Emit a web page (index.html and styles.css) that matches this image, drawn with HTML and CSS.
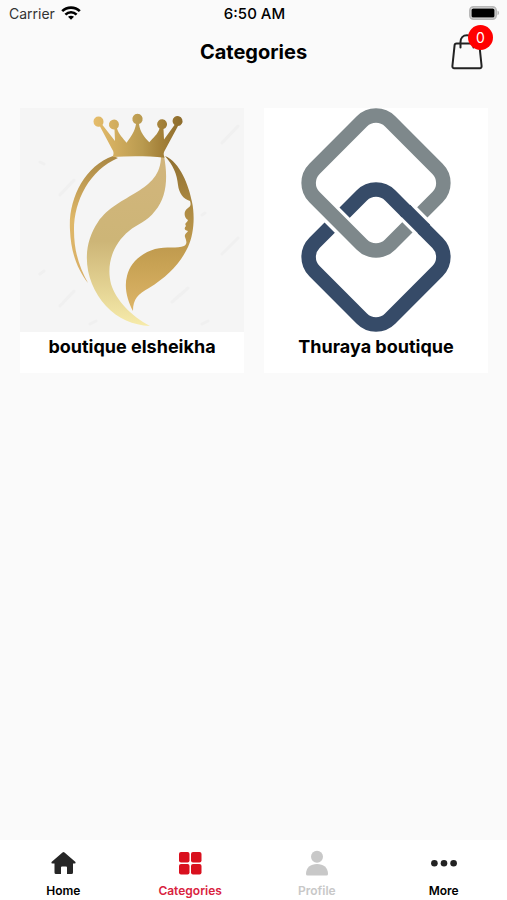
FILE: index.html
```html
<!DOCTYPE html>
<html lang="en">
<head>
    <meta charset="UTF-8">
    <meta name="viewport" content="width=device-width, initial-scale=1.0">
    <title>Categories</title>
    <link rel="stylesheet" href="styles.css">
</head>
<body>
    <div class="status-bar">
        <div class="carrier">
            <span>Carrier</span>
            <svg width="20" height="14" viewBox="0 0 20 14" fill="none" stroke="#000" stroke-width="2.6">
                <path d="M1.2 5.2C6 0.4 14 0.4 18.8 5.2"/>
                <path d="M4.4 8.6C7.6 5.5 12.4 5.5 15.6 8.6"/>
                <path d="M10 13.8L7 10.8C8.7 9.3 11.3 9.3 13 10.8Z" fill="#000" stroke="none"/>
            </svg>
        </div>
        <span class="time">6:50 AM</span>
        <svg class="battery" width="31" height="14" viewBox="0 0 31 14">
            <rect x="0.9" y="0.9" width="26.2" height="12.2" rx="3.6" fill="#fafafa" stroke="#b8b8b8" stroke-width="1.8"/>
            <rect x="2.5" y="2.5" width="23" height="9" rx="1.6" fill="#000"/>
            <path d="M28.5 4.8C30.6 5.4 30.6 8.6 28.5 9.2Z" fill="#b8b8b8"/>
        </svg>
    </div>

    <header class="header">
        <h1>Categories</h1>
        <button class="cart" type="button" aria-label="Cart">
            <svg width="32" height="36" viewBox="0 0 32 36" fill="none" stroke="#222" stroke-width="2" stroke-linecap="round" stroke-linejoin="round">
                <path d="M5.5 9.5H26.5C27.6 9.5 28.3 10.1 28.4 11.2L30.6 32C30.7 33.3 30 34.2 28.8 34.2H3.2C2 34.2 1.3 33.3 1.4 32L3.6 11.2C3.7 10.1 4.4 9.5 5.5 9.5Z"/>
                <path d="M9.5 13.5V8C9.5 4 12 1.2 16 1.2S22.5 4 22.5 8V13.5"/>
            </svg>
            <span class="badge">0</span>
        </button>
    </header>

    <main class="cards">
        <a class="card" href="#">
            <svg class="picture" viewBox="0 0 224 224">
                <defs>
                    <linearGradient id="crown" x1="0" x2="1" y1="0" y2="0">
                        <stop offset="0" stop-color="#e6bd6b"/>
                        <stop offset="0.55" stop-color="#b99a4f"/>
                        <stop offset="0.75" stop-color="#a5823a"/>
                        <stop offset="1" stop-color="#8d6c2c"/>
                    </linearGradient>
                    <linearGradient id="arc" x1="0" x2="0" y1="0" y2="1">
                        <stop offset="0" stop-color="#a98743"/>
                        <stop offset="0.5" stop-color="#dfb869"/>
                        <stop offset="1" stop-color="#d8ae66"/>
                    </linearGradient>
                    <linearGradient id="hair" x1="0" x2="0" y1="0" y2="1">
                        <stop offset="0" stop-color="#d2b57c"/>
                        <stop offset="0.5" stop-color="#cdb577"/>
                        <stop offset="1" stop-color="#f6ebaa"/>
                    </linearGradient>
                    <linearGradient id="face" x1="0" x2="0" y1="0" y2="1">
                        <stop offset="0" stop-color="#8f6f30"/>
                        <stop offset="0.35" stop-color="#ae8b43"/>
                        <stop offset="0.7" stop-color="#c8a254"/>
                        <stop offset="1" stop-color="#ddb568"/>
                    </linearGradient>
                </defs>
                <rect width="224" height="224" fill="#f5f5f5"/>
                <g stroke="#f0f0f0" stroke-width="3" stroke-linecap="round">
                    <path d="M202 35L218 18M40 87L54 72M202 146L218 130M40 198L54 183M152 194L168 180"/>
                    <path d="M20 54L24 56M20 166L24 163M182 107L185 105M70 216L76 213M182 216L188 213"/>
                </g>
                <path fill="url(#arc)" d="M93 48C64 58 48 92 50 122C51 146 58 162 68 175C60 160 54 145 54 122C54 92 70 62 98 50Z"/>
                <path fill="url(#hair)" d="M141 48C141 85 98 85 78 114C59 142 66 176 86 198C98 211 113 217 130 218C111 208 96 192 91 176C86 156 93 136 109 123C117 116 127 114 135 103C147 89 148 69 144 48Z"/>
                <path fill="url(#face)" d="M145 48C160 54 169 78 172 94C175 108 174 126 168 139C160 156 147 169 129 180C118 186 113 191 113 203C107 192 104 179 107 168C110 156 119 146 135 141C146 138 158 141 164 138C168 136 166 132 165 129C164 126 167 125 168 123C164 122 164 120 166 118C164 115 167 115 168 112C164 110 163 103 168 100C171 98 171 96 170 93C163 91 159 85 158 77C157 66 153 57 145 48Z"/>
                <path fill="url(#crown)" d="M73.5 13.5A5 5 0 0 1 83.5 13.5A5 5 0 0 1 82.5 17L95 33L94.5 21.5A5 5 0 1 1 97 20.5C99 27 103 30 106.5 34.7C111 29 115 23 116 16A5.2 5.2 0 1 1 119 16C120 24 125 30 129.300 34.300C133 30 138 26 139.500 20.500A5 5 0 1 1 143.500 21L144 31.500L154.500 17A5 5 0 1 1 158 18L144.500 43C143 46 144 47 144.500 49.700C128 48 110 48 92.500 49C94 46 94 44 92 41L80 18.500A5 5 0 0 1 73.500 13.500Z"/>
            </svg>
            <span class="name">boutique elsheikha</span>
        </a>
        <a class="card" href="#">
            <svg class="picture" viewBox="0 0 224 224" fill="none" stroke-width="14.5">
                <rect x="58.5" y="95.5" width="107" height="107" rx="20" transform="rotate(45 112 149)" stroke="#364b68"/>
                <path d="M65 104L81 120" stroke="#fff" stroke-width="21"/>
                <rect x="58.5" y="21.5" width="107" height="107" rx="20" transform="rotate(45 112 75)" stroke="#7e888b"/>
                <path d="M143 104L159 120" stroke="#fff" stroke-width="21"/>
                <path d="M141 102L161 122" stroke="#364b68"/>
            </svg>
            <span class="name">Thuraya boutique</span>
        </a>
    </main>

    <nav class="tabs">
        <a href="#" class="tab">
            <svg width="26" height="26" viewBox="0 0 26 26" fill="#262626">
                <path d="M12.5 2.5Q13.5 1.7 14.5 2.5L25.5 12Q26 13.5 24.5 13.5H23V22.5Q23 24 21.5 24H17V17.5Q17 16.5 16 16.5H12Q11 16.5 11 17.5V24H6Q4.5 24 4.5 22.5V13.5H2.5Q1 13.5 1.5 12Z"/>
            </svg>
            <span>Home</span>
        </a>
        <a href="#" class="tab active">
            <svg width="26" height="26" viewBox="0 0 26 26" fill="#d9101e">
                <rect x="2" y="2" width="10.5" height="10.5" rx="2"/>
                <rect x="14" y="2" width="10.5" height="10.5" rx="2"/>
                <rect x="2" y="14" width="10.5" height="10.5" rx="2"/>
                <rect x="14" y="14" width="10.5" height="10.5" rx="2"/>
            </svg>
            <span>Categories</span>
        </a>
        <a href="#" class="tab disabled">
            <svg width="26" height="26" viewBox="0 0 26 26" fill="#c8c8c8">
                <circle cx="13" cy="6.8" r="6"/>
                <path d="M2 24C2 17.5 6.5 14 13 14S24 17.5 24 24Q24 25.5 22.5 25.5H3.5Q2 25.5 2 24Z"/>
            </svg>
            <span>Profile</span>
        </a>
        <a href="#" class="tab">
            <svg width="26" height="26" viewBox="0 0 26 26" fill="#222">
                <circle cx="3.4" cy="13.3" r="3.3"/>
                <circle cx="13" cy="13.3" r="3.3"/>
                <circle cx="22.6" cy="13.3" r="3.3"/>
            </svg>
            <span>More</span>
        </a>
    </nav>
</body>
</html>
```
FILE: styles.css
```css
* {
    box-sizing: border-box;
}
body {
    display: flex;
    flex-direction: column;
    min-height: 100vh;
    margin: 0;
    font-family: Inter, "Liberation Sans", sans-serif;
    background-color: #fafafa;
    color: #000;
}
a {
    color: inherit;
    text-decoration: none;
}
.status-bar {
    display: grid;
    grid-template-columns: 1fr auto 1fr;
    align-items: center;
    height: 26px;
    padding: 0 7px 0 9px;
    font-size: 14px;
}
.carrier {
    display: flex;
    align-items: center;
    gap: 6px;
    color: #333;
}
.time {
    font-size: 15px;
    font-weight: 500;
}
.battery {
    justify-self: end;
}
.header {
    display: grid;
    grid-template-columns: 1fr auto 1fr;
    align-items: center;
    height: 52px;
    padding: 0 24px;
}
.header h1 {
    grid-column: 2;
    margin: 0;
    font-size: 20px;
    font-weight: 700;
}
.cart {
    position: relative;
    justify-self: end;
    height: 36px;
    padding: 0;
    border: none;
    background: none;
    font-family: inherit;
    cursor: pointer;
}
.cart svg {
    display: block;
}
.badge {
    position: absolute;
    top: -9px;
    right: -10px;
    width: 25px;
    height: 25px;
    border-radius: 50%;
    background-color: #ff0000;
    color: #fff;
    font-size: 14px;
    line-height: 25px;
    text-align: center;
}
.cards {
    display: grid;
    grid-template-columns: 1fr 1fr;
    gap: 20px;
    flex: 1;
    align-content: start;
    padding: 30px 19px 20px 20px;
}
.card {
    display: block;
    padding-bottom: 12px;
    background-color: #fff;
    text-align: center;
}
.picture {
    display: block;
    width: 100%;
}
.name {
    display: block;
    padding: 3px 0 2px;
    font-size: 18px;
    font-weight: 700;
    line-height: 24px;
}
.tabs {
    display: flex;
    background-color: #fff;
}
.tab {
    display: flex;
    flex: 1;
    flex-direction: column;
    align-items: center;
    gap: 6px;
    padding-top: 10px;
    font-size: 12px;
    font-weight: 600;
    line-height: 18px;
}
.tab.active {
    color: #d9233f;
}
.tab.disabled {
    color: #c8c8c8;
}
```
